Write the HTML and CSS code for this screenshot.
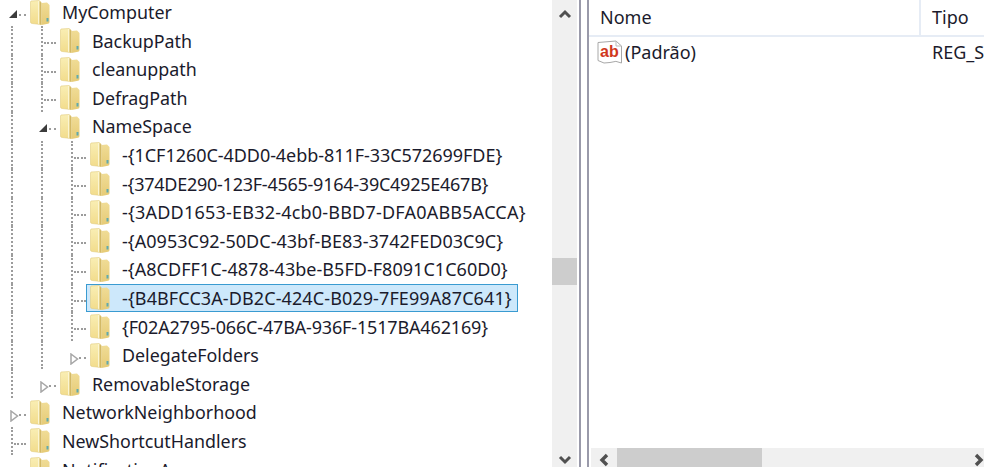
FILE: index.html
```html
<!DOCTYPE html>
<html lang="en">
<head>
    <meta charset="UTF-8">
    <title>Editor do Registro</title>
    <link rel="stylesheet" href="styles.css">
</head>
<body>
    <svg class="defs" width="0" height="0">
        <defs>
            <linearGradient id="fold-left" x1="0" y1="0" x2="0" y2="1">
                <stop offset="0" stop-color="#f9eeb4"/>
                <stop offset="1" stop-color="#f2dc8c"/>
            </linearGradient>
            <linearGradient id="fold-right" x1="0" y1="0" x2="0" y2="1">
                <stop offset="0" stop-color="#f0dc96"/>
                <stop offset="1" stop-color="#e6cb76"/>
            </linearGradient>
            <symbol id="folder" viewBox="0 0 20 25">
                <path d="M1 1 L9 0.5 L11 2 L11 24.5 L2 23.5 Q0.5 23.3 0.5 22 L0.5 2 Z" fill="url(#fold-left)" stroke="#e3cd82" stroke-width="0.6"/>
                <path d="M8 1 L9.5 1 L9.5 24 L8 23.8 Z" fill="#fbf5d2"/>
                <path d="M9.5 1 L11.5 3 L11.5 25 L9.5 24 Z" fill="#d3b966"/>
                <path d="M11.5 3 L17 2.5 L19.5 5 L19.5 22 Q19.5 23.5 18 23.7 L11.5 25 Z" fill="url(#fold-right)"/>
                <rect x="16.5" y="18" width="2" height="3.5" fill="#5fa9b0"/>
            </symbol>
            <symbol id="open" viewBox="0 0 10 10">
                <path d="M9 1 L9 9 L1 9 Z" fill="#3c3c3c"/>
            </symbol>
            <symbol id="closed" viewBox="0 0 10 12">
                <path d="M2 1 L8.5 6 L2 11 Z" fill="#fff" stroke="#a6a6a6" stroke-width="1.5"/>
            </symbol>
        </defs>
    </svg>

    <div class="window">
        <div class="tree">
            <div class="row">
                <span class="cell exp"><svg class="tw-open"><use href="#open"/></svg></span>
                <span class="node"><svg class="folder"><use href="#folder"/></svg>MyComputer</span>
            </div>
            <div class="row">
                <span class="cell line"></span><span class="cell tee"></span>
                <span class="node"><svg class="folder"><use href="#folder"/></svg>BackupPath</span>
            </div>
            <div class="row">
                <span class="cell line"></span><span class="cell tee"></span>
                <span class="node"><svg class="folder"><use href="#folder"/></svg>cleanuppath</span>
            </div>
            <div class="row">
                <span class="cell line"></span><span class="cell tee"></span>
                <span class="node"><svg class="folder"><use href="#folder"/></svg>DefragPath</span>
            </div>
            <div class="row">
                <span class="cell line"></span><span class="cell exp"><svg class="tw-open"><use href="#open"/></svg></span>
                <span class="node"><svg class="folder"><use href="#folder"/></svg>NameSpace</span>
            </div>
            <div class="row">
                <span class="cell line"></span><span class="cell line"></span><span class="cell tee"></span>
                <span class="node guid g-tight"><svg class="folder"><use href="#folder"/></svg>-{1CF1260C-4DD0-4ebb-811F-33C572699FDE}</span>
            </div>
            <div class="row">
                <span class="cell line"></span><span class="cell line"></span><span class="cell tee"></span>
                <span class="node guid g-tightest"><svg class="folder"><use href="#folder"/></svg>-{374DE290-123F-4565-9164-39C4925E467B}</span>
            </div>
            <div class="row">
                <span class="cell line"></span><span class="cell line"></span><span class="cell tee"></span>
                <span class="node guid g-wide"><svg class="folder"><use href="#folder"/></svg>-{3ADD1653-EB32-4cb0-BBD7-DFA0ABB5ACCA}</span>
            </div>
            <div class="row">
                <span class="cell line"></span><span class="cell line"></span><span class="cell tee"></span>
                <span class="node guid"><svg class="folder"><use href="#folder"/></svg>-{A0953C92-50DC-43bf-BE83-3742FED03C9C}</span>
            </div>
            <div class="row">
                <span class="cell line"></span><span class="cell line"></span><span class="cell tee"></span>
                <span class="node guid"><svg class="folder"><use href="#folder"/></svg>-{A8CDFF1C-4878-43be-B5FD-F8091C1C60D0}</span>
            </div>
            <div class="row">
                <span class="cell line"></span><span class="cell line"></span><span class="cell tee"></span>
                <span class="node guid g-sel selected"><svg class="folder"><use href="#folder"/></svg>-{B4BFCC3A-DB2C-424C-B029-7FE99A87C641}</span>
            </div>
            <div class="row">
                <span class="cell line"></span><span class="cell line"></span><span class="cell tee"></span>
                <span class="node guid g-tighter"><svg class="folder"><use href="#folder"/></svg>{F02A2795-066C-47BA-936F-1517BA462169}</span>
            </div>
            <div class="row">
                <span class="cell line"></span><span class="cell line"></span><span class="cell exp"><svg class="tw-closed"><use href="#closed"/></svg></span>
                <span class="node"><svg class="folder"><use href="#folder"/></svg>DelegateFolders</span>
            </div>
            <div class="row">
                <span class="cell line"></span><span class="cell exp"><svg class="tw-closed"><use href="#closed"/></svg></span>
                <span class="node"><svg class="folder"><use href="#folder"/></svg>RemovableStorage</span>
            </div>
            <div class="row">
                <span class="cell exp"><svg class="tw-closed"><use href="#closed"/></svg></span>
                <span class="node"><svg class="folder"><use href="#folder"/></svg>NetworkNeighborhood</span>
            </div>
            <div class="row">
                <span class="cell tee"></span>
                <span class="node"><svg class="folder"><use href="#folder"/></svg>NewShortcutHandlers</span>
            </div>
            <div class="row">
                <span class="cell exp"><svg class="tw-closed"><use href="#closed"/></svg></span>
                <span class="node"><svg class="folder"><use href="#folder"/></svg>NotificationArea</span>
            </div>
        </div>

        <div class="vscroll">
            <svg class="chev" viewBox="0 0 14 10"><path d="M2 8 L7 3 L12 8"/></svg>
            <div class="vtrack"><div class="vthumb"></div></div>
            <svg class="chev" viewBox="0 0 14 10"><path d="M2 2 L7 7 L12 2"/></svg>
        </div>

        <div class="splitter"></div>

        <div class="list">
            <div class="list-head">
                <div class="col-name">Nome</div>
                <div class="col-type">Tipo</div>
            </div>
            <div class="list-row">
                <div class="col-name value">
                    <svg class="ab" viewBox="0 0 26 25">
                        <path d="M1 2.5 L19 1 L24.5 6 L24.5 23 Q19 20 13 22.5 Q7 24.5 1 20.5 Z" fill="#fff" stroke="#a8a8a8" stroke-width="1"/>
                        <path d="M19 1 L19 6 L24.5 6" fill="none" stroke="#bcbcbc" stroke-width="1"/>
                        <text x="3" y="17" class="ab-text">ab</text>
                    </svg>
                    (Padrão)
                </div>
                <div class="col-type">REG_SZ</div>
            </div>
            <div class="list-fill"></div>
            <div class="hscroll">
                <svg class="chev-h" viewBox="0 0 10 14"><path d="M8 2 L3 7 L8 12"/></svg>
                <div class="hthumb"></div>
                <svg class="chev-h chev-end" viewBox="0 0 10 14"><path d="M2 2 L7 7 L2 12"/></svg>
            </div>
        </div>
    </div>
</body>
</html>
```

FILE: styles.css
```css
html, body {
    margin: 0;
    height: 467px;
    overflow: hidden;
    background: #fff;
}
body {
    font-family: "Noto Sans", "Open Sans", sans-serif;
    font-size: 18px;
    color: #1b1b2c;
}
.defs {
    display: block;
    height: 0;
}
.window {
    display: flex;
    width: 984px;
    height: 467px;
    overflow: hidden;
}

/* arvore da esquerda */
.tree {
    width: 552px;
    flex: none;
    overflow: hidden;
    margin-top: -2.3px;
    font-size: 17.85px;
}
.row {
    display: flex;
    height: 28.6px;
    margin-left: -4px;
    white-space: nowrap;
}
.cell {
    position: relative;
    width: 30px;
    flex: none;
}
.line::before,
.tee::before {
    content: "";
    position: absolute;
    left: 15px;
    top: 0;
    bottom: 0;
    border-left: 2px dotted #9c9c9c;
}
.tee::after,
.exp::after {
    content: "";
    position: absolute;
    top: 16px;
    right: 0;
    border-top: 2px dotted #9c9c9c;
}
.tee::after {
    left: 18px;
}
.exp::after {
    left: 23px;
}
.tw-open {
    position: absolute;
    left: 12px;
    top: 11px;
    width: 10px;
    height: 10px;
}
.tw-closed {
    position: absolute;
    left: 13px;
    top: 12px;
    width: 10px;
    height: 12px;
}
.node {
    display: flex;
    align-items: center;
    gap: 12px;
    padding: 0 5px 0 3px;
    border: 1px solid transparent;
}
.guid {
    font-size: 18px;
    letter-spacing: 0.03px;
}
.g-sel {
    letter-spacing: 0.1px;
}
.g-wide {
    letter-spacing: 0.21px;
}
.g-tight {
    letter-spacing: -0.05px;
}
.g-tighter {
    letter-spacing: -0.16px;
}
.g-tightest {
    letter-spacing: -0.25px;
}
.node.selected {
    background: #cde8fb;
    border-color: #3a9bd1;
}
.folder {
    width: 20px;
    height: 25px;
    flex: none;
}

/* barras de rolagem */
.vscroll {
    width: 25px;
    flex: none;
    display: flex;
    flex-direction: column;
    background: #f0f0f0;
}
.chev {
    width: 14px;
    height: 10px;
    flex: none;
    margin: 9px auto 2px;
    fill: none;
    stroke: #505050;
    stroke-width: 3;
}
.vtrack {
    flex: 1;
    padding-top: 237px;
}
.vthumb {
    height: 27px;
    background: #cdcdcd;
}
.splitter {
    width: 10px;
    flex: none;
    margin-left: 2px;
    box-sizing: border-box;
    border-left: 2px solid #9a9aaa;
    border-right: 2px solid #9a9aaa;
}

/* lista de valores */
.list {
    flex: 1;
    min-width: 0;
    display: flex;
    flex-direction: column;
}
.list-head,
.list-row {
    display: flex;
    white-space: nowrap;
}
.list-head {
    height: 37px;
    align-items: center;
    box-sizing: border-box;
    border-bottom: 2px solid #e6ecf5;
}
.col-name {
    width: 332px;
    flex: none;
    box-sizing: border-box;
    padding-left: 11px;
}
.list-head .col-name {
    height: 100%;
    display: flex;
    align-items: center;
    padding-bottom: 2px;
    border-right: 2px solid #e6ecf5;
}
.list-head .col-type {
    padding-bottom: 2px;
}
.col-type {
    padding-left: 11px;
}
.list-row {
    height: 30px;
    align-items: center;
}
.value {
    display: flex;
    align-items: center;
    gap: 2px;
    padding-left: 8px;
}
.ab {
    width: 26px;
    height: 25px;
    flex: none;
}
.ab-text {
    font-family: "Liberation Sans", sans-serif;
    font-size: 16px;
    font-weight: 700;
    fill: #d0381c;
}
.list-fill {
    flex: 1;
}
.hscroll {
    height: 19px;
    margin-left: 2px;
    flex: none;
    display: flex;
    align-items: center;
    background: #f0f0f0;
}
.chev-h {
    width: 10px;
    height: 14px;
    flex: none;
    margin: 4px 8px 0;
    fill: none;
    stroke: #505050;
    stroke-width: 3.4;
}
.chev-end {
    margin: 4px 0 0 auto;
}
.hthumb {
    width: 145px;
    flex: none;
    align-self: stretch;
    background: #cdcdcd;
}
```
